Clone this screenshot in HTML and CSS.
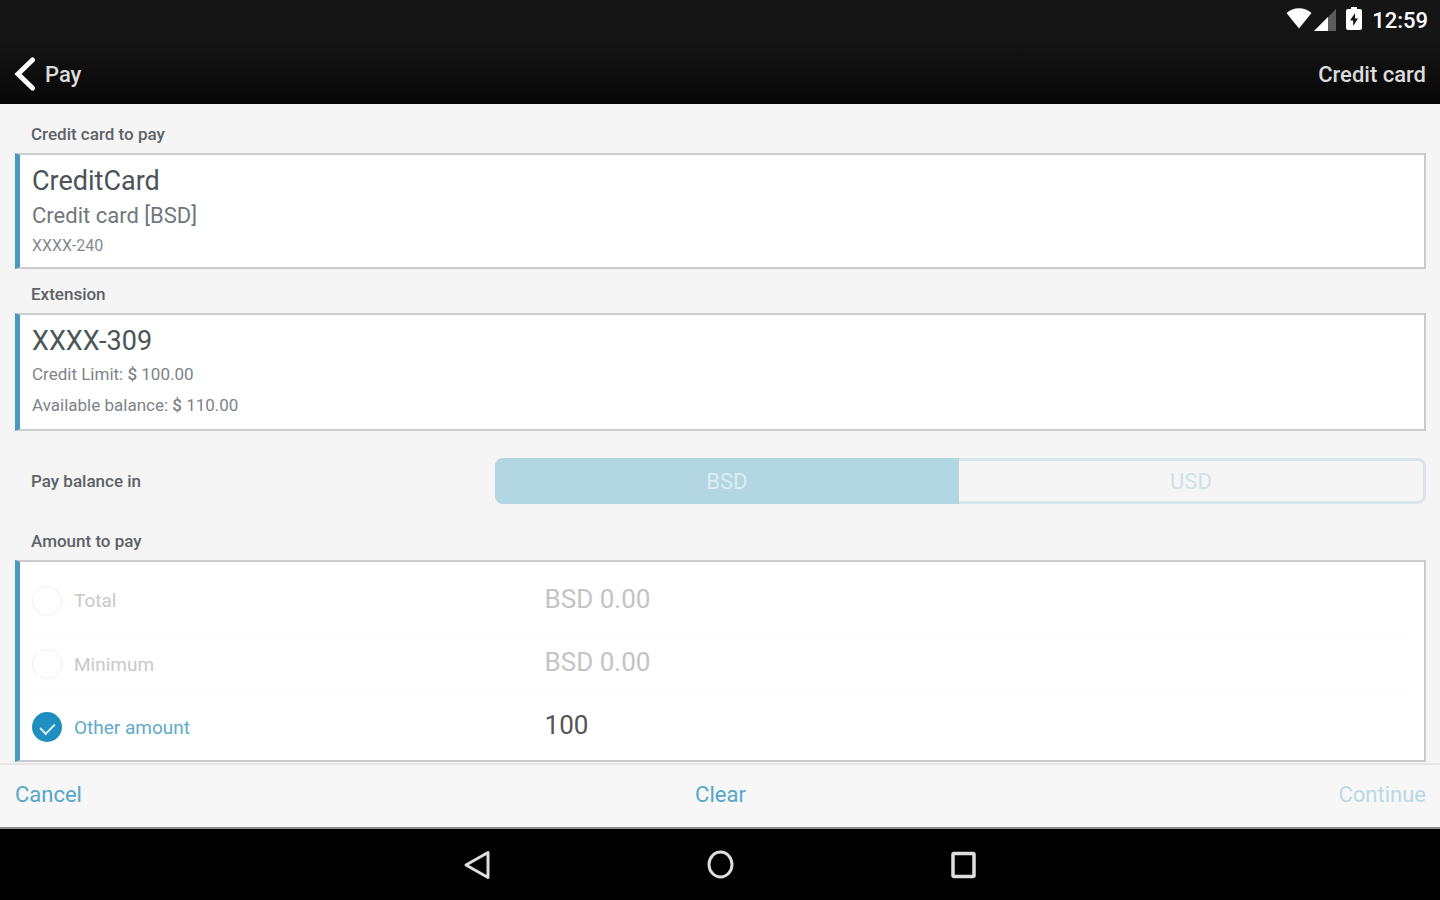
FILE: index.html
```html
<!DOCTYPE html>
<html lang="en">
<head>
  <meta charset="UTF-8" />
  <meta name="viewport" content="width=device-width, initial-scale=1.0" />
  <title>Pay | Credit card</title>
  <link rel="stylesheet" href="styles.css">
</head>
<body>
  <header class="top">
    <div class="status-bar">
      <svg class="wifi" width="26" height="22" viewBox="0 0 26 22">
        <path d="M13 21.5 L0.5 6 C7 -0.5 19 -0.5 25.5 6 Z" fill="#fff"/>
      </svg>
      <svg class="signal" width="22" height="22" viewBox="0 0 22 22">
        <path d="M0 22 L22 0 V22 Z" fill="#5c5c5c"/>
        <path d="M0 22 L14 8 V22 Z" fill="#fff"/>
      </svg>
      <svg class="battery" width="16" height="23" viewBox="0 0 16 23">
        <path d="M5 0 H11 V2 H14 Q16 2 16 4 V21 Q16 23 14 23 H2 Q0 23 0 21 V4 Q0 2 2 2 H5 Z" fill="#fff"/>
        <path d="M9 6 L4 13.5 H7.2 V19 L12 11.5 H9 Z" fill="#151515"/>
      </svg>
      <span class="clock">12:59</span>
    </div>
    <div class="title-bar">
      <a class="back" href="#">
        <svg width="22" height="34" viewBox="0 0 22 34">
          <path d="M18.5 3 L4 17 L18.5 31" fill="none" stroke="#fff" stroke-width="5" stroke-linecap="round"/>
        </svg>
        Pay
      </a>
      <h1>Credit card</h1>
    </div>
  </header>

  <main>
    <h2 class="label first">Credit card to pay</h2>
    <section class="card">
      <p class="name">CreditCard</p>
      <p class="type">Credit card [BSD]</p>
      <p class="number">XXXX-240</p>
    </section>

    <h2 class="label">Extension</h2>
    <section class="card">
      <p class="name">XXXX-309</p>
      <p class="detail">Credit Limit: <b>$</b> 100.00</p>
      <p class="detail">Available balance: <b>$</b> 110.00</p>
    </section>

    <div class="currency">
      <h2 class="label inline">Pay balance in</h2>
      <div class="segmented">
        <button class="active" disabled>BSD</button>
        <button disabled>USD</button>
      </div>
    </div>

    <h2 class="label">Amount to pay</h2>
    <section class="card amounts">
      <div class="row">
        <label for="total"><input type="radio" name="amount" id="total" disabled>Total</label>
        <span class="value">BSD 0.00</span>
      </div>
      <div class="row">
        <label for="minimum"><input type="radio" name="amount" id="minimum" disabled>Minimum</label>
        <span class="value">BSD 0.00</span>
      </div>
      <div class="row selected">
        <label for="other"><input type="radio" name="amount" id="other" checked>Other amount</label>
        <input class="value" type="text" value="100" aria-label="Other amount">
      </div>
    </section>
  </main>

  <footer class="actions">
    <button>Cancel</button>
    <button>Clear</button>
    <button disabled>Continue</button>
  </footer>

  <nav class="system">
    <button aria-label="Back">
      <svg width="28" height="30" viewBox="0 0 28 30">
        <path d="M25 2.5 V27.5 L3 15 Z" fill="none" stroke="#dedede" stroke-width="3" stroke-linejoin="round"/>
      </svg>
    </button>
    <button aria-label="Home">
      <svg width="28" height="30" viewBox="0 0 28 30">
        <ellipse cx="14.5" cy="14.5" rx="11.5" ry="12.5" fill="none" stroke="#dedede" stroke-width="3"/>
      </svg>
    </button>
    <button aria-label="Recent apps">
      <svg width="28" height="30" viewBox="0 0 28 30">
        <rect x="4" y="3.5" width="21" height="23" rx="1" fill="none" stroke="#dedede" stroke-width="3.5"/>
      </svg>
    </button>
  </nav>
</body>
</html>
```

FILE: styles.css
```css
* {
  box-sizing: border-box;
}
body {
  margin: 0;
  min-height: 100vh;
  display: flex;
  flex-direction: column;
  font-family: Roboto, "Liberation Sans", sans-serif;
  background: #f5f5f5;
  color: #4c5459;
}
h1, h2, p {
  margin: 0;
  font-weight: 400;
}
button {
  font-family: inherit;
  border: none;
  background: none;
  padding: 0;
  cursor: pointer;
}
.top {
  background: linear-gradient(#151515 40%, #060606);
  color: #fff;
}
.status-bar {
  display: flex;
  justify-content: flex-end;
  align-items: center;
  height: 40px;
  padding-right: 12px;
}
.wifi {
  margin-right: 2px;
  margin-bottom: 4px;
}
.signal {
  margin-right: 10px;
}
.battery {
  margin-right: 10px;
  margin-bottom: 4px;
}
.clock {
  font-size: 22px;
  font-weight: 500;
}
.title-bar {
  display: flex;
  justify-content: space-between;
  align-items: center;
  height: 64px;
  padding: 4px 14px 0;
}
.title-bar h1,
.back {
  font-size: 22px;
  font-weight: 500;
  color: #dcdcdc;
}
.back {
  display: flex;
  align-items: center;
  gap: 9px;
  text-decoration: none;
}
main {
  flex: 1;
  padding: 0 14px 0 15px;
}
.label {
  margin: 15px 0 9px 16px;
  font-size: 17px;
  line-height: 20px;
  font-weight: 500;
  color: #5c6267;
}
.label.first {
  margin-top: 20px;
}
.card {
  background: #fff;
  border: 2px solid #cbcbcb;
  border-left: 5px solid #4799c0;
  padding: 8px 12px;
}
.name {
  font-size: 27px;
  line-height: 36px;
}
.type {
  font-size: 22px;
  line-height: 34px;
  color: #70777c;
}
.number {
  font-size: 16px;
  line-height: 26px;
  color: #858b90;
}
.detail {
  font-size: 17px;
  line-height: 31px;
  color: #7d8388;
}
.detail b {
  font-weight: 500;
}
.currency {
  display: flex;
  justify-content: space-between;
  align-items: center;
  margin: 27px 0;
}
.label.inline {
  margin: 0 0 0 16px;
}
.segmented {
  display: flex;
  width: 66%;
  height: 46px;
  border: 3px solid #d8e6eb;
  border-radius: 8px;
}
.segmented button {
  flex: 1;
  font-size: 22px;
  color: #cfe2e8;
}
.segmented .active {
  margin: -3px 0 -3px -3px;
  border-radius: 8px 0 0 8px;
  background: #b2d7e3;
  color: #dceef3;
}
.amounts {
  padding: 7px 12px 2px;
}
.row {
  display: flex;
  justify-content: space-between;
  align-items: center;
  height: 63px;
  color: #c9c9c9;
}
.row + .row {
  border-top: 1px solid #fcfcfc;
}
.row label {
  display: flex;
  align-items: center;
  gap: 12px;
  font-size: 19px;
}
.row input[type="radio"] {
  appearance: none;
  display: flex;
  justify-content: center;
  width: 30px;
  height: 30px;
  margin: 0;
  border: 1px solid #f0f0f0;
  border-radius: 50%;
}
.row input[type="radio"]:checked {
  border: none;
  background: #1f8fbf;
}
.row input[type="radio"]:checked::before {
  content: "";
  width: 7px;
  height: 12px;
  margin-top: 8px;
  border: solid #d3ecf6;
  border-width: 0 2px 2px 0;
  transform: rotate(45deg);
}
.value {
  width: 63%;
  padding: 0 0 4px 2px;
  font-family: inherit;
  font-size: 26px;
  line-height: 32px;
  color: #c4c4c4;
}
input.value {
  border: none;
  outline: none;
  background: none;
  color: #555;
}
.selected label {
  color: #5eabca;
}
.actions {
  display: grid;
  grid-template-columns: 1fr 1fr 1fr;
  height: 66px;
  padding: 0 14px 4px 15px;
  border-top: 2px solid #e6e6e6;
  border-bottom: 2px solid #8c8c8c;
  background: #f7f7f7;
}
.actions button {
  justify-self: center;
  font-size: 22px;
  color: #55a6c8;
}
.actions button:first-child {
  justify-self: start;
}
.actions button:last-child {
  justify-self: end;
  color: #b9dae3;
}
.system {
  display: flex;
  justify-content: center;
  align-items: center;
  gap: 195px;
  height: 71px;
  background: #000;
}
.system button {
  width: 48px;
  height: 48px;
}
.system svg {
  display: block;
  margin: 0 auto;
}
```
